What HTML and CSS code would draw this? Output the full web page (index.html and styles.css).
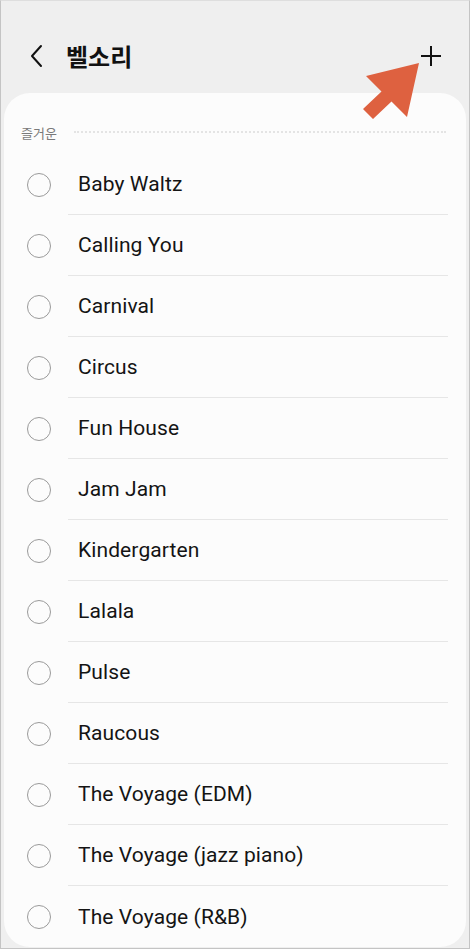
FILE: index.html
```html
<!DOCTYPE html>
<html lang="ko">
<head>
<meta charset="utf-8">
<title>벨소리</title>
<link rel="stylesheet" href="styles.css">
</head>
<body>
<div class="frame">
  <header class="appbar">
    <svg class="back" width="14" height="24" viewBox="0 0 14 24"><path d="M11 2 L2 12 L11 22" fill="none" stroke="#111" stroke-width="2" stroke-linecap="round" stroke-linejoin="round"/></svg>
    <h1 class="title">벨소리</h1>
    <svg class="plus" width="22" height="22" viewBox="0 0 22 22"><path d="M11 1 V21 M1 11 H21" stroke="#111" stroke-width="2"/></svg>
  </header>
  <svg class="arrow" width="470" height="130" viewBox="0 0 470 130"><polygon points="419,63 407,117 391.5,101.5 373,119 363,109 381.5,91.5 366,76" fill="#de6140"/></svg>
  <main class="card">
    <div class="section">
      <span class="section-label">즐거운</span>
      <span class="section-line"></span>
    </div>
    <ul class="list">
      <li class="row"><span class="radio-cell"><span class="radio"></span></span><span class="name">Baby Waltz</span></li>
      <li class="row"><span class="radio-cell"><span class="radio"></span></span><span class="name">Calling You</span></li>
      <li class="row"><span class="radio-cell"><span class="radio"></span></span><span class="name">Carnival</span></li>
      <li class="row"><span class="radio-cell"><span class="radio"></span></span><span class="name">Circus</span></li>
      <li class="row"><span class="radio-cell"><span class="radio"></span></span><span class="name">Fun House</span></li>
      <li class="row"><span class="radio-cell"><span class="radio"></span></span><span class="name">Jam Jam</span></li>
      <li class="row"><span class="radio-cell"><span class="radio"></span></span><span class="name">Kindergarten</span></li>
      <li class="row"><span class="radio-cell"><span class="radio"></span></span><span class="name">Lalala</span></li>
      <li class="row"><span class="radio-cell"><span class="radio"></span></span><span class="name">Pulse</span></li>
      <li class="row"><span class="radio-cell"><span class="radio"></span></span><span class="name">Raucous</span></li>
      <li class="row"><span class="radio-cell"><span class="radio"></span></span><span class="name">The Voyage (EDM)</span></li>
      <li class="row"><span class="radio-cell"><span class="radio"></span></span><span class="name">The Voyage (jazz piano)</span></li>
      <li class="row last"><span class="radio-cell"><span class="radio"></span></span><span class="name">The Voyage (R&amp;B)</span></li>
    </ul>
  </main>
</div>
</body>
</html>
```
FILE: styles.css
```css
* { box-sizing: border-box; }
html, body { margin: 0; padding: 0; }
body {
  font-family: Roboto, "Noto Sans CJK KR", sans-serif;
  background: #efefef;
}
.frame {
  position: relative;
  width: 470px;
  height: 949px;
  border: 1px solid #c4c4c4;
  border-top-color: #dedede;
  background: #efefef;
  display: flex;
  flex-direction: column;
  padding: 0 3px 1px 3px;
  overflow: hidden;
}
.appbar {
  height: 92px;
  flex: none;
  display: flex;
  align-items: center;
  padding: 17px 0 0 26px;
}
.back { margin-top: 0; }
.title {
  margin: 0 0 0 22px;
  font-family: "Noto Sans CJK KR", Roboto, sans-serif;
  font-weight: 700;
  font-size: 24px;
  color: #111;
  flex: 1;
  line-height: 1;
}
.plus { margin-right: 24px; margin-top: 0; }
.arrow {
  position: absolute;
  left: -1px;
  top: -1px;
  pointer-events: none;
  z-index: 2;
}
.card {
  flex: 1;
  background: #fcfcfc;
  border-radius: 26px;
  overflow: hidden;
}
.section {
  display: flex;
  align-items: center;
  height: 26px;
  margin-top: 26px;
  margin-bottom: 9px;
  padding: 0 20px 0 17px;
}
.section-label {
  font-family: "Noto Sans CJK KR", Roboto, sans-serif;
  font-size: 13px;
  color: #7a7a7a;
}
.section-line {
  flex: 1;
  margin-left: 17px;
  border-top: 2px dotted #e4e4e4;
}
.list {
  list-style: none;
  margin: 0;
  padding: 0;
}
.row {
  display: flex;
  align-items: stretch;
  height: 61px;
}
.radio-cell {
  width: 64px;
  flex: none;
  display: flex;
  align-items: center;
  padding-left: 23px;
}
.radio {
  width: 24px;
  height: 24px;
  border-radius: 50%;
  border: 1.5px solid #9a9a9a;
}
.name {
  flex: 1;
  display: flex;
  align-items: center;
  padding-left: 10px;
  margin-right: 18px;
  border-bottom: 1px solid #e6e6e6;
  font-size: 21px;
  color: #141414;
  letter-spacing: 0.1px;
}
.row.last .name { border-bottom: none; }
```
